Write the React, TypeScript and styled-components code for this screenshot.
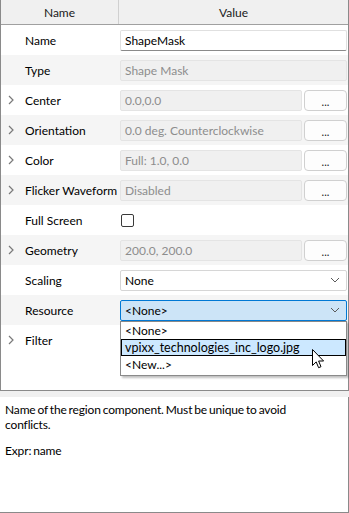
import React from "react";
import styled, { createGlobalStyle } from "styled-components";

const GlobalStyle = createGlobalStyle`
  html, body {
    margin: 0;
    padding: 0;
    background: #f0f0f0;
  }
  * {
    box-sizing: border-box;
  }
`;

type Row = {
  label: string;
  kind: "input" | "disabled" | "button" | "check" | "select" | "open" | "none";
  value?: string;
  expandable?: boolean;
};

const rows: Row[] = [
  { label: "Name", kind: "input", value: "ShapeMask" },
  { label: "Type", kind: "disabled", value: "Shape Mask" },
  { label: "Center", kind: "button", value: "0.0,0.0", expandable: true },
  { label: "Orientation", kind: "button", value: "0.0 deg. Counterclockwise", expandable: true },
  { label: "Color", kind: "button", value: "Full: 1.0, 0.0", expandable: true },
  { label: "Flicker Waveform", kind: "button", value: "Disabled", expandable: true },
  { label: "Full Screen", kind: "check" },
  { label: "Geometry", kind: "button", value: "200.0, 200.0", expandable: true },
  { label: "Scaling", kind: "select", value: "None" },
  { label: "Resource", kind: "open", value: "<None>" },
  { label: "Filter", kind: "none", expandable: true },
];

const options = ["<None>", "vpixx_technologies_inc_logo.jpg", "<New...>"];

const Chevron = () => (
  <svg width="6" height="10" viewBox="0 0 6 10">
    <path d="M1 1 L5 5 L1 9" fill="none" stroke="#7a7a7a" strokeWidth="1.2" />
  </svg>
);

const DownArrow = () => (
  <svg width="10" height="6" viewBox="0 0 10 6">
    <path d="M1 1 L5 5 L9 1" fill="none" stroke="#5a5a5a" strokeWidth="1" />
  </svg>
);

const Cursor = () => (
  <svg width="13" height="21" viewBox="0 0 13 21">
    <path
      d="M0.5 0.5 L0.5 16.5 L4.2 12.9 L6.6 18.7 L9 17.7 L6.6 12 L11.6 12 Z"
      fill="#fff"
      stroke="#000"
      strokeWidth="1"
      strokeLinejoin="round"
    />
  </svg>
);

function renderValue(row: Row) {
  switch (row.kind) {
    case "input":
      return <TextBox>{row.value}</TextBox>;
    case "disabled":
      return <TextBox disabled>{row.value}</TextBox>;
    case "button":
      return (
        <ValueWithButton>
          <TextBox disabled>{row.value}</TextBox>
          <DotsButton>...</DotsButton>
        </ValueWithButton>
      );
    case "check":
      return <CheckBox />;
    case "select":
      return (
        <SelectBox>
          <span>{row.value}</span>
          <DownArrow />
        </SelectBox>
      );
    case "open":
      return (
        <SelectBox open>
          <span>{row.value}</span>
          <DownArrow />
          <OptionList>
            {options.map((o, i) => (
              <OptionItem key={o} active={i === 1}>
                {o}
              </OptionItem>
            ))}
          </OptionList>
          <CursorSpot>
            <Cursor />
          </CursorSpot>
        </SelectBox>
      );
    default:
      return null;
  }
}

export default function App() {
  return (
    <>
      <GlobalStyle />
      <Page>
        <Grid>
          <Header>
            <HeaderCell>Name</HeaderCell>
            <HeaderCell last>Value</HeaderCell>
          </Header>
          {rows.map((row, i) => (
            <PropRow key={row.label} shaded={i % 2 === 1}>
              <LabelCell>
                <ExpandSlot>{row.expandable && <Chevron />}</ExpandSlot>
                {row.label}
              </LabelCell>
              <ValueCell>{renderValue(row)}</ValueCell>
            </PropRow>
          ))}
        </Grid>
        <Description>
          <p>Name of the region component. Must be unique to avoid conflicts.</p>
          <p>Expr: name</p>
        </Description>
      </Page>
    </>
  );
}

const Page = styled.div`
  width: 349px;
  height: 513px;
  display: flex;
  flex-direction: column;
  gap: 6px;
  font-family: Lato, "Open Sans", sans-serif;
  font-size: 12px;
  color: #000;
`;

const Grid = styled.div`
  height: 391px;
  background: #fff;
  border-left: 1px solid #8a8a8a;
  border-right: 1px solid #8a8a8a;
  border-bottom: 1px solid #8a8a8a;
  display: flex;
  flex-direction: column;
`;

const Header = styled.div`
  height: 25px;
  display: grid;
  grid-template-columns: 118px 1fr;
  background: #f0f0f0;
  border-bottom: 1px solid #a0a0a0;
`;

const HeaderCell = styled.div<{ last?: boolean }>`
  display: flex;
  align-items: center;
  justify-content: center;
  color: #1a1a1a;
  border-right: ${(p) => (p.last ? "none" : "1px solid #d0d0d0")};
`;

const PropRow = styled.div<{ shaded?: boolean }>`
  height: 30px;
  flex-shrink: 0;
  display: grid;
  grid-template-columns: 119px 1fr;
  align-items: center;
  background: ${(p) => (p.shaded ? "#f5f5f5" : "#fff")};
`;

const LabelCell = styled.div`
  display: flex;
  align-items: center;
  white-space: nowrap;
`;

const ExpandSlot = styled.span`
  width: 24px;
  padding-left: 7px;
  display: flex;
  align-items: center;
`;

const ValueCell = styled.div`
  padding-right: 1px;
  display: flex;
  align-items: center;
`;

const TextBox = styled.div<{ disabled?: boolean }>`
  flex: 1;
  height: 21px;
  padding: 0 4px;
  display: flex;
  align-items: center;
  white-space: nowrap;
  overflow: hidden;
  border-radius: 2px;
  background: ${(p) => (p.disabled ? "#f0f0f0" : "#fff")};
  color: ${(p) => (p.disabled ? "#8d8d8d" : "#000")};
  border: 1px solid ${(p) => (p.disabled ? "#e4e4e4" : "#e0e0e0")};
  border-bottom-color: ${(p) => (p.disabled ? "#e4e4e4" : "#8a8a8a")};
`;

const ValueWithButton = styled.div`
  flex: 1;
  display: flex;
  align-items: center;
  gap: 2px;
`;

const DotsButton = styled.div`
  width: 43px;
  height: 21px;
  display: flex;
  align-items: center;
  justify-content: center;
  padding-top: 2px;
  background: #fdfdfd;
  border: 1px solid #d0d0d0;
  border-radius: 4px;
  color: #222;
  font-size: 11px;
`;

const CheckBox = styled.span`
  width: 13px;
  height: 13px;
  margin-left: 1px;
  border: 1px solid #3a3a3a;
  border-radius: 2px;
  background: #fff;
`;

const SelectBox = styled.div<{ open?: boolean }>`
  position: relative;
  flex: 1;
  height: 21px;
  padding: 0 6px 0 4px;
  display: flex;
  align-items: center;
  justify-content: space-between;
  background: ${(p) => (p.open ? "#cce4f7" : "#fff")};
  border: 1px solid ${(p) => (p.open ? "#0078d4" : "#d6d6d6")};
  border-radius: 2px;
`;

const OptionList = styled.div`
  position: absolute;
  left: -1px;
  right: -1px;
  top: 20px;
  padding: 0 0 2px;
  background: #fff;
  border: 1px solid #8a8a8a;
  box-shadow: 2px 2px 2px rgba(0, 0, 0, 0.25);
  z-index: 2;
`;

const OptionItem = styled.div<{ active?: boolean }>`
  height: 17px;
  padding: 0 3px;
  display: flex;
  align-items: center;
  background: ${(p) => (p.active ? "#cce8ff" : "transparent")};
  border: 1px solid ${(p) => (p.active ? "#000" : "transparent")};
  font-size: ${(p) => (p.active ? "12.5px" : "12px")};
`;

const CursorSpot = styled.div`
  position: absolute;
  left: 191px;
  top: 48px;
  z-index: 3;
  line-height: 0;
`;

const Description = styled.div`
  flex: 1;
  background: #fff;
  border-right: 1px solid #8a8a8a;
  border-bottom: 1px solid #8a8a8a;
  padding: 5px 5px;
  line-height: 15px;
  letter-spacing: -0.15px;
  word-spacing: -1px;

  p {
    margin: 0 0 11px;
    width: 300px;
  }
`;
